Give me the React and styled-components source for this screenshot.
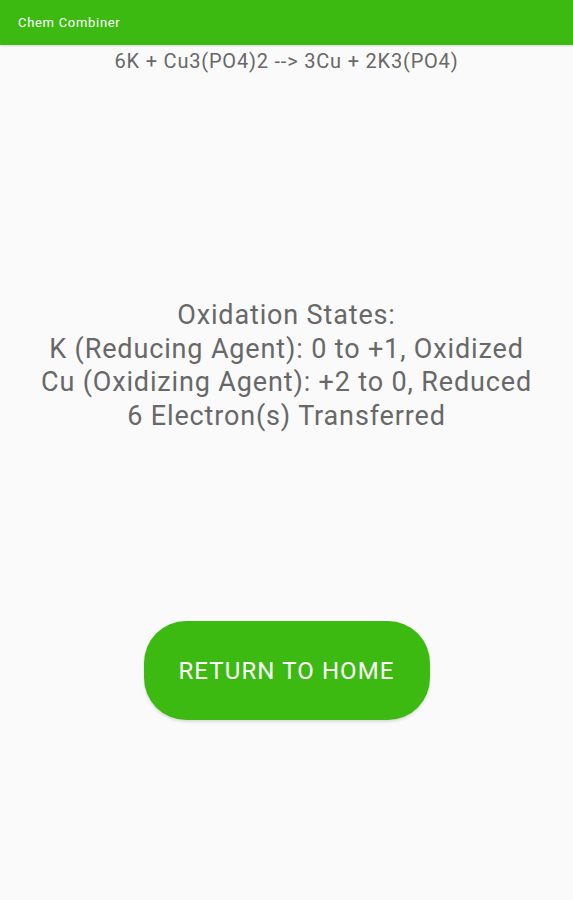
import React from 'react';
import styled, { createGlobalStyle } from 'styled-components';

const GlobalStyle = createGlobalStyle`
  html, body {
    margin: 0;
    padding: 0;
    background: #fafafa;
    font-family: Roboto, "Liberation Sans", sans-serif;
  }
`;

const Page = styled.div`
  width: 573px;
  height: 900px;
  display: flex;
  flex-direction: column;
  background: #fafafa;
`;

const AppBar = styled.header`
  height: 45px;
  background: #3cba12;
  display: flex;
  align-items: center;
  padding-left: 18px;
  box-shadow: 0 1px 2px rgba(0, 0, 0, 0.15);
`;

const Title = styled.h1`
  margin: 0;
  font-size: 13px;
  font-weight: 400;
  letter-spacing: 0.7px;
  color: #fff;
`;

const Equation = styled.div`
  margin-top: 4px;
  text-align: center;
  font-size: 20px;
  line-height: 24px;
  letter-spacing: 0.8px;
  color: #686868;
`;

const States = styled.div`
  margin-top: 226px;
  text-align: center;
  font-size: 27px;
  line-height: 33.5px;
  letter-spacing: 0.85px;
  color: #686868;
`;

const ButtonRow = styled.div`
  margin-top: 188px;
  display: flex;
  justify-content: center;
`;

const HomeButton = styled.button`
  width: 286px;
  height: 99px;
  border: none;
  border-radius: 42px;
  background: #3cba12;
  color: #fff;
  font-family: inherit;
  font-size: 24px;
  font-weight: 400;
  letter-spacing: 1.1px;
  box-shadow: 0 2px 3px rgba(0, 0, 0, 0.12);
  cursor: pointer;
`;

const lines = [
  'Oxidation States:',
  'K (Reducing Agent): 0 to +1, Oxidized',
  'Cu (Oxidizing Agent): +2 to 0, Reduced',
  '6 Electron(s) Transferred',
];

export default function App() {
  return (
    <>
      <GlobalStyle />
      <Page>
        <AppBar>
          <Title>Chem Combiner</Title>
        </AppBar>
        <Equation>6K + Cu3(PO4)2 --&gt; 3Cu + 2K3(PO4)</Equation>
        <States>
          {lines.map((l) => (
            <div key={l}>{l}</div>
          ))}
        </States>
        <ButtonRow>
          <HomeButton>RETURN TO HOME</HomeButton>
        </ButtonRow>
      </Page>
    </>
  );
}
